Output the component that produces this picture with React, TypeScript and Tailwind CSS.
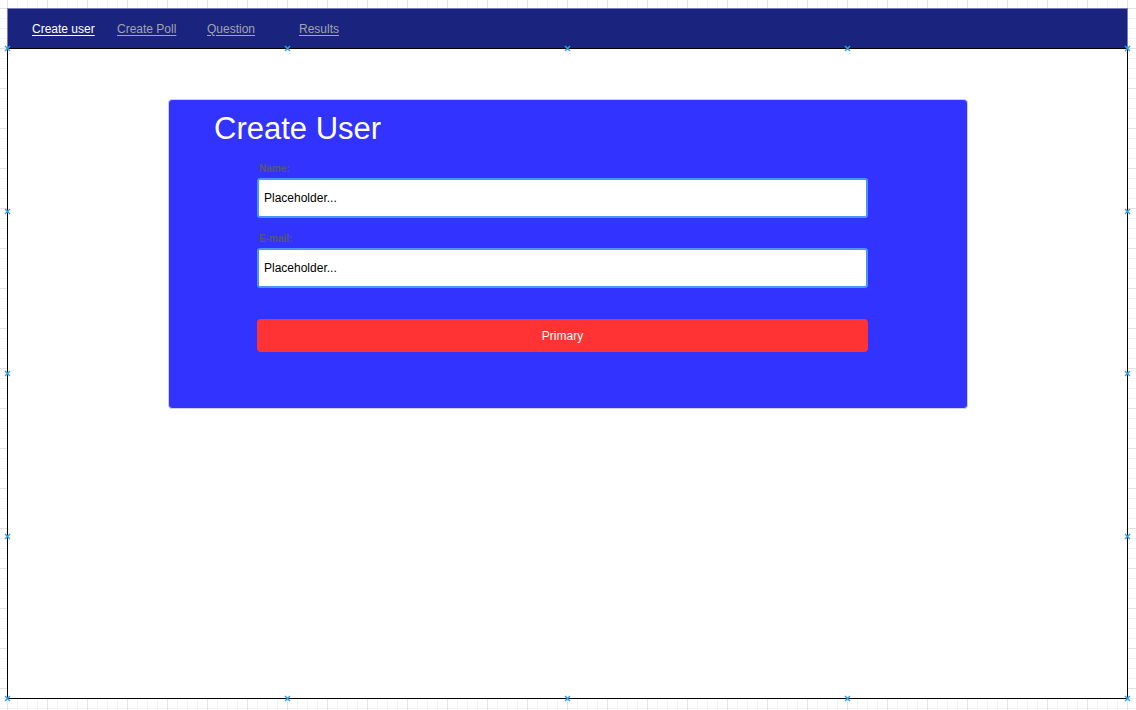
import React from "react";

const NAV_LINKS = [
  { label: "Create user", active: true, width: "w-[85px]" },
  { label: "Create Poll", active: false, width: "w-[90px]" },
  { label: "Question", active: false, width: "w-[92px]" },
  { label: "Results", active: false, width: "w-[60px]" },
];

// draw.io style connection points around the frame
const MARKERS: [number, number][] = [
  [7, 48], [287, 48], [567, 48], [847, 48], [1127, 48],
  [7, 211], [1127, 211],
  [7, 373], [1127, 373],
  [7, 536], [1127, 536],
  [7, 698], [287, 698], [567, 698], [847, 698], [1127, 698],
];

const Marker = ({ x, y }: { x: number; y: number }) => (
  <svg
    className="absolute w-[7px] h-[7px]"
    style={{ left: x - 3, top: y - 3 }}
    viewBox="0 0 7 7"
  >
    <path d="M1 1L6 6M6 1L1 6" stroke="#29a3e8" strokeWidth="1.4" />
  </svg>
);

const Field = ({ label, first }: { label: string; first?: boolean }) => (
  <div className={first ? "mt-[19px]" : "mt-[15px]"}>
    <div className="text-[10px] leading-[12px] font-bold text-[#58586e] pl-[2px] mb-[3px]">{label}</div>
    <input
      readOnly
      defaultValue="Placeholder..."
      className="w-full h-[40px] bg-white border-2 border-[#4d94ff] rounded-[3px] px-[5px] text-[12px] text-black outline-none"
    />
  </div>
);

export default function App() {
  return (
    <div className="relative w-[1136px] h-[710px] overflow-hidden bg-white pl-[7px] pt-[8px] font-['Liberation_Sans',Arial,sans-serif] bg-[linear-gradient(to_right,#e3e3e3_1px,transparent_1px),linear-gradient(to_bottom,#e3e3e3_1px,transparent_1px),linear-gradient(to_right,#f3f3f3_1px,transparent_1px),linear-gradient(to_bottom,#f3f3f3_1px,transparent_1px)] bg-[size:40px_40px,40px_40px,10px_10px,10px_10px] bg-[position:7px_8px]">
      <div className="w-[1121px] flex flex-col">
        {/* Nav */}
        <nav className="h-[40px] bg-[#1a237e] border-t border-x border-[#7b7fb8] flex items-center pl-[24px] text-[12px]">
          {NAV_LINKS.map((l) => (
            <div key={l.label} className={l.width}>
              <a
                href="#"
                className={`underline underline-offset-2 ${l.active ? "text-white" : "text-[#a3a3b0]"}`}
              >
                {l.label}
              </a>
            </div>
          ))}
        </nav>

        {/* Content */}
        <main className="h-[651px] bg-white border border-black pt-[50px] pl-[160px]">
          <div className="w-[800px] h-[310px] bg-[#3333ff] border border-[#cfcfe0] rounded-[4px] pt-[13px]">
            <h1 className="pl-[45px] text-[31px] leading-[31px] text-white">Create User</h1>
            <form className="ml-[88px] w-[611px]" onSubmit={(e) => e.preventDefault()}>
              <Field label="Name:" first />
              <Field label="E-mail:" />
              <button
                type="submit"
                className="mt-[31px] w-full h-[33px] bg-[#ff3333] rounded-[4px] text-white text-[12px]"
              >
                Primary
              </button>
            </form>
          </div>
        </main>
      </div>

      {MARKERS.map(([x, y]) => (
        <Marker key={`${x}-${y}`} x={x} y={y} />
      ))}
    </div>
  );
}
